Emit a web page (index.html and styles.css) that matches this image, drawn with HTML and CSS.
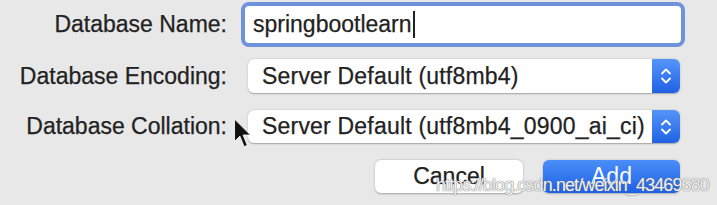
FILE: index.html
```html
<!DOCTYPE html>
<html>
  <head>
    <meta charset="utf-8">
    <title>New Database</title>
    <link rel="stylesheet" href="styles.css">
  </head>
  <body>
    <div class="dialog">
      <div class="row row--name">
        <label class="row__label">Database Name:</label>
        <div class="name-input">springbootlearn<span class="caret"></span></div>
      </div>
      <div class="row row--encoding">
        <label class="row__label">Database Encoding:</label>
        <div class="select">
          <span class="select__value">Server Default (utf8mb4)</span>
          <span class="stepper">
            <svg width="14" height="22" viewBox="0 0 14 22"><path d="M3 8.5 L7 4.5 L11 8.5 M3 13.5 L7 17.5 L11 13.5" fill="none" stroke="#fff" stroke-width="1.8" stroke-linecap="round" stroke-linejoin="round"/></svg>
          </span>
        </div>
      </div>
      <div class="row row--collation">
        <label class="row__label">Database Collation:</label>
        <div class="select">
          <span class="select__value">Server Default (utf8mb4_0900_ai_ci)</span>
          <span class="stepper">
            <svg width="14" height="22" viewBox="0 0 14 22"><path d="M3 8.5 L7 4.5 L11 8.5 M3 13.5 L7 17.5 L11 13.5" fill="none" stroke="#fff" stroke-width="1.8" stroke-linecap="round" stroke-linejoin="round"/></svg>
          </span>
        </div>
      </div>
      <div class="buttons">
        <button class="btn btn--cancel">Cancel</button>
        <button class="btn btn--add">Add</button>
      </div>
    </div>
    <!-- курсор мыши поверх формы -->
    <svg class="pointer" width="20" height="32" viewBox="0 0 18 30">
      <path d="M2 1 L2 22 L7 17 L11 27 L14 25.5 L10 16 L17 16 Z" fill="#111" stroke="#fff" stroke-width="0.8"/>
    </svg>
    <div class="watermark">https://blog.csdn.net/weixin_43469680</div>
  </body>
</html>
```

FILE: styles.css
```css
html {
  background: #e8e8e8;
}

body {
  margin: 0;
  padding: 0;
  font-family: "Liberation Sans", Arial, Helvetica, sans-serif;
  color: #222;
  position: relative;
  width: 717px;
  height: 205px;
  overflow: hidden;
}

.dialog {
  padding-top: 2px;
}

.row {
  display: flex;
  align-items: center;
}

.row__label {
  width: 227px;
  text-align: right;
  font-size: 23px;
  flex-shrink: 0;
  -webkit-text-stroke: 0.25px #222;
}

.row--name {
  height: 45px;
}

.row--encoding {
  margin-top: 12px;
  height: 34px;
}

.row--collation {
  margin-top: 17px;
  height: 33px;
}

.name-input {
  margin-left: 14px;
  width: 444px;
  height: 45px;
  box-sizing: border-box;
  border: 4px solid #6f93da;
  border-radius: 8px;
  background: #fff;
  font-size: 23px;
  padding-left: 8px;
  display: flex;
  align-items: center;
  -webkit-text-stroke: 0.25px #222;
}

.caret {
  display: inline-block;
  width: 2px;
  height: 27px;
  background: #222;
  margin-left: 1px;
}

.select {
  margin-left: 21px;
  width: 432px;
  height: 100%;
  display: flex;
  background: #fff;
  border-radius: 6px;
  box-shadow: 0 0.5px 1.5px rgba(0, 0, 0, 0.3);
}

.select__value {
  flex: 1;
  font-size: 23px;
  letter-spacing: 0.2px;
  padding-left: 14px;
  display: flex;
  align-items: center;
  -webkit-text-stroke: 0.25px #222;
}

.stepper {
  width: 28px;
  display: flex;
  align-items: center;
  justify-content: center;
  background: linear-gradient(#5595f9, #1f62e4);
  border-radius: 0 6px 6px 0;
}

.buttons {
  display: flex;
  margin-top: 17px;
  padding-left: 375px;
  gap: 20px;
}

.btn {
  height: 33px;
  border: none;
  border-radius: 6px;
  font-family: "Liberation Sans", Arial, Helvetica, sans-serif;
  font-size: 23px;
  padding: 0;
}

.btn--cancel {
  width: 148px;
  background: #fff;
  color: #222;
  box-shadow: 0 0.5px 2px rgba(0, 0, 0, 0.3);
  -webkit-text-stroke: 0.25px #222;
}

.btn--add {
  width: 137px;
  color: #fff;
  background: linear-gradient(#4a8ef8, #1d61e6);
  box-shadow: 0 0.5px 2px rgba(0, 0, 0, 0.25);
}

.pointer {
  position: absolute;
  left: 232px;
  top: 118px;
}

.watermark {
  position: absolute;
  left: 436px;
  top: 175px;
  font-size: 18px;
  letter-spacing: -0.9px;
  color: rgba(255, 255, 255, 0.9);
  text-shadow: 0 0 1px #777, 0 0 1px #777;
  white-space: nowrap;
}
```
